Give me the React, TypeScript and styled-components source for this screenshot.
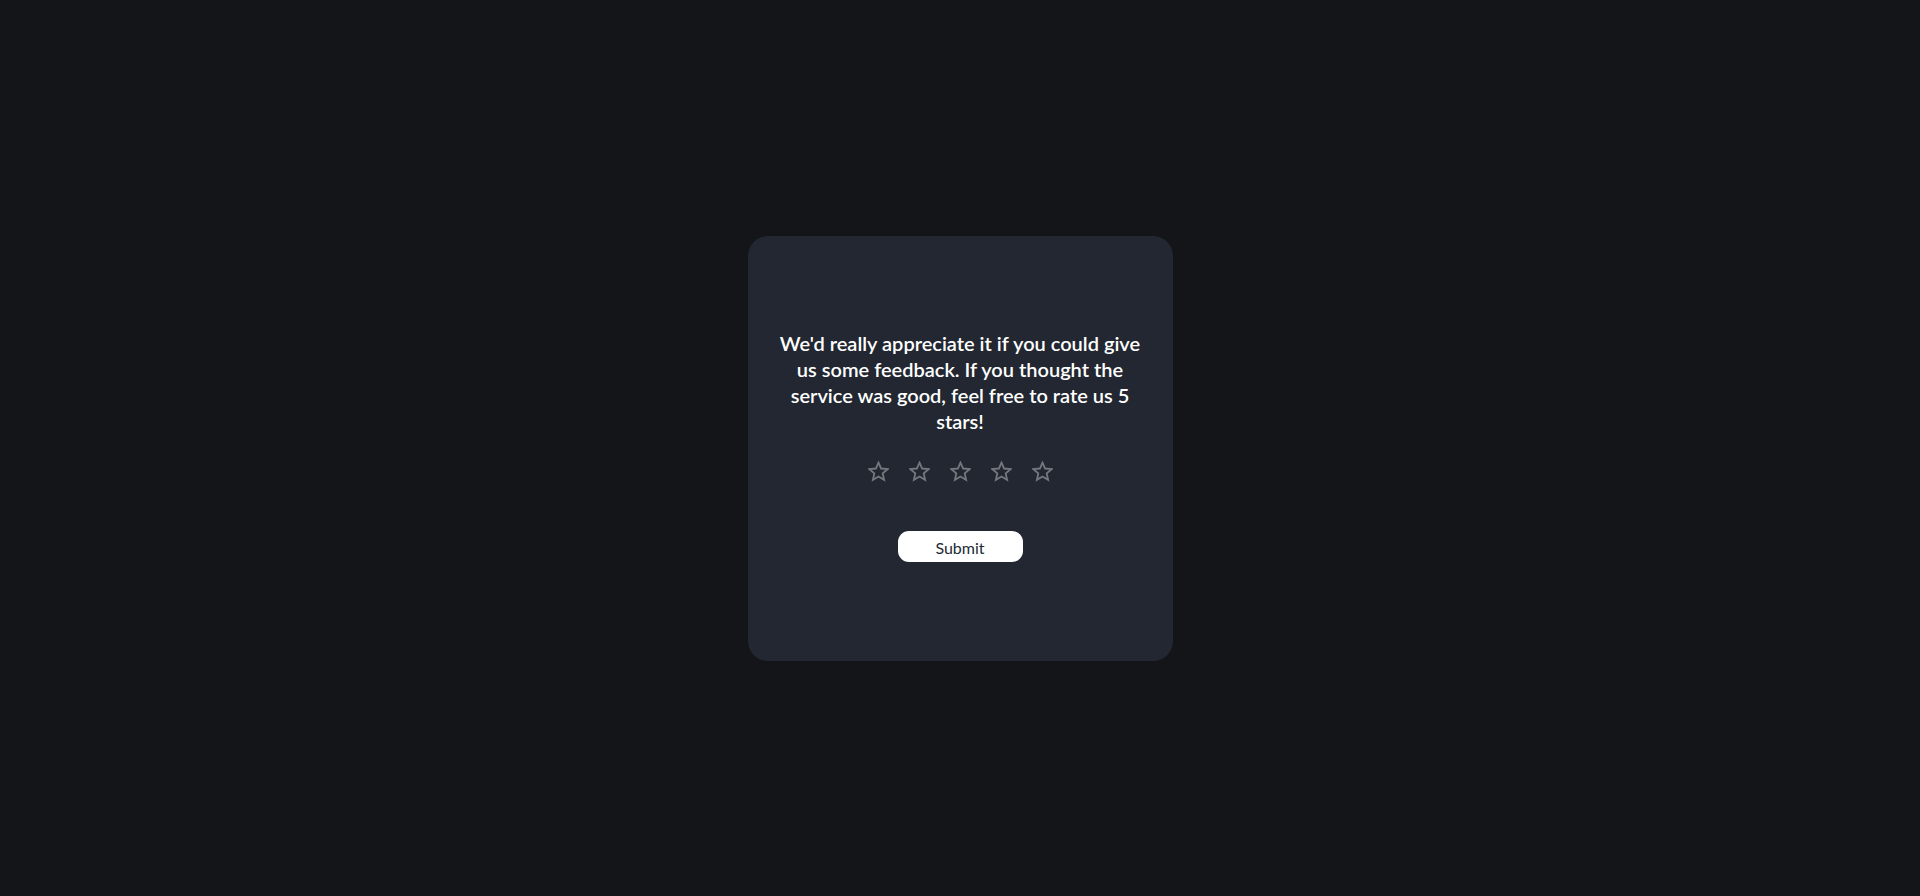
import React from "react";
import styled, { createGlobalStyle } from "styled-components";

const Global = createGlobalStyle`
  html, body { margin: 0; padding: 0; background: #131519; }
  body { font-family: Lato, "Noto Sans", sans-serif; }
`;

const Page = styled.main`
  width: 100vw;
  height: 100vh;
  display: flex;
  align-items: center;
  justify-content: center;
  background: #131519;
`;

const Card = styled.section`
  width: 425px;
  height: 425px;
  box-sizing: border-box;
  padding: 0 26px 5px;
  border-radius: 20px;
  background: #222731;
  display: flex;
  flex-direction: column;
  align-items: center;
  justify-content: center;
`;

const Message = styled.p`
  margin: 0;
  color: #ffffff;
  font-family: Lato, "Noto Sans", sans-serif;
  font-size: 20px;
  font-weight: 600;
  line-height: 26px;
  text-align: center;
`;

const Stars = styled.div`
  display: flex;
  gap: 20px;
  margin-top: 27px;
`;

const StarButton = styled.button`
  width: 21px;
  height: 21px;
  padding: 0;
  border: none;
  background: none;
  color: #74777d;
  cursor: pointer;
  display: flex;
  svg { display: block; }
`;

const SubmitButton = styled.button`
  margin-top: 49px;
  width: 125px;
  height: 31px;
  border: none;
  border-radius: 11px;
  background: #ffffff;
  color: #222a36;
  font-family: Lato, "Noto Sans", sans-serif;
  font-size: 16px;
  padding: 2px 0 0;
  cursor: pointer;
`;

const StarIcon = () => (
  <svg width="21" height="21" viewBox="0 0 24 24" fill="none" stroke="currentColor" strokeWidth="2.1" strokeLinejoin="miter">
    <polygon points="12,1.8 15,8.6 22.4,9.3 16.8,14.2 18.4,21.6 12,17.8 5.6,21.6 7.2,14.2 1.6,9.3 9,8.6" />
  </svg>
);

export default function App() {
  return (
    <>
      <Global />
      <Page>
        <Card>
          <Message>
            We'd really appreciate it if you could give us some feedback. If you thought the service was good, feel free to rate us 5 stars!
          </Message>
          <Stars>
            {[1, 2, 3, 4, 5].map((n) => (
              <StarButton key={n} aria-label={`${n} star`}>
                <StarIcon />
              </StarButton>
            ))}
          </Stars>
          <SubmitButton>Submit</SubmitButton>
        </Card>
      </Page>
    </>
  );
}
